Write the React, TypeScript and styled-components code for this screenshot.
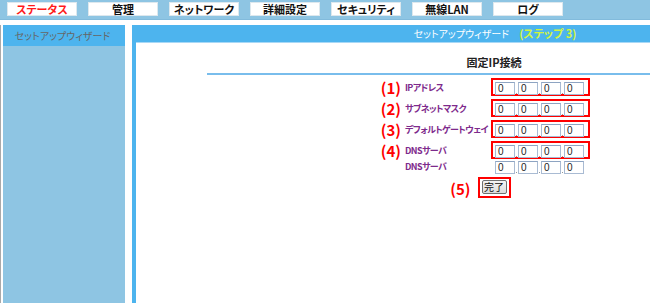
import React from "react";
import styled, { createGlobalStyle } from "styled-components";

const GlobalStyle = createGlobalStyle`
  html, body { margin: 0; padding: 0; background: #fff; overflow: hidden; }
  body {
    font-family: "Noto Sans CJK JP", "Noto Sans", sans-serif;
    font-feature-settings: "palt";
  }
  * { box-sizing: border-box; }
`;

const TopBar = styled.div`
  height: 20px;
  background: #8ec5e3;
  border-bottom: 1px solid #82bbdc;
  display: flex;
  gap: 11px;
  padding: 2px 0 0 7px;
`;

const Tab = styled.div<{ $active?: boolean }>`
  width: 70px;
  height: 14px;
  background: #fff;
  border: 1px solid #dde8ee;
  font-size: 11px;
  font-weight: 700;
  line-height: 12px;
  text-align: center;
  color: ${(p) => (p.$active ? "#ff1a1a" : "#111")};
`;

const Body = styled.div`
  display: flex;
  margin-top: 5px;
  height: 278px;
  border-left: 1px solid #a9a9a9;
  padding-left: 2px;
`;

const Sidebar = styled.div`
  width: 122px;
  flex-shrink: 0;
  background: #8ec5e3;
`;

const SideHeader = styled.div`
  height: 21px;
  background: #4db4ee;
  color: #666;
  font-size: 10px;
  line-height: 21px;
  text-align: center;
  padding-right: 3px;
`;

const Main = styled.div`
  margin-left: 7px;
  width: 720px;
  flex-shrink: 0;
  border-left: 4px solid #4db4ee;
  background: #fff;
`;

const MainHeader = styled.div`
  height: 18px;
  background: #4db4ee;
  border-bottom: 1px solid #a8d8f6;
  color: #fff;
  font-size: 10px;
  line-height: 17px;
  text-align: center;
  padding-left: 2px;
`;

const Step = styled.span`
  color: #d2f53e;
  font-size: 11px;
  font-weight: 700;
  margin-left: 10px;
`;

const Form = styled.div`
  width: 574px;
  margin: 9px auto 0;
`;

const Title = styled.div`
  height: 23px;
  border-bottom: 2px solid #79bdec;
  font-size: 11px;
  font-weight: 700;
  line-height: 20px;
  text-align: center;
  color: #222;
`;

const Rows = styled.div`
  display: flex;
  flex-direction: column;
  gap: 3px;
  margin-top: 3px;
`;

const Row = styled.div<{ $plain?: boolean }>`
  display: grid;
  grid-template-columns: 194px 90px auto;
  align-items: center;
  height: 18px;
  margin-top: ${(p) => (p.$plain ? "-5px" : "0")};
`;

const Num = styled.span`
  justify-self: end;
  color: #ff0000;
  font-size: 15px;
  font-weight: 700;
  line-height: 18px;
  position: relative;
  top: 1px;
`;

const Label = styled.span`
  padding-left: 4px;
  color: #7e2a8c;
  font-size: 9px;
  font-weight: 700;
  letter-spacing: -0.6px;
  white-space: nowrap;
  line-height: 18px;
  position: relative;
  top: 1px;
`;

const IpBox = styled.div<{ $marked?: boolean }>`
  display: flex;
  align-items: flex-start;
  border: 2px solid ${(p) => (p.$marked ? "#ff0000" : "transparent")};
  padding: 2px 4px 0 2px;
  height: 18px;
  width: 99px;
`;

const IpInput = styled.div`
  width: 20px;
  height: 13px;
  border: 1px solid #a9bbd3;
  border-top-color: #8ea4c2;
  background: #fff;
  font-size: 10px;
  line-height: 11px;
  padding-left: 2px;
  color: #222;
  font-family: "Liberation Sans", sans-serif;
`;

const Dot = styled.span`
  width: 3px;
  height: 13px;
  position: relative;
  &::after {
    content: "";
    position: absolute;
    left: 1px;
    bottom: 1px;
    width: 1px;
    height: 1px;
    background: #999;
  }
`;

const ButtonRow = styled.div`
  display: grid;
  grid-template-columns: 1fr auto 1fr;
  align-items: center;
  margin-top: 2px;
`;

const ButtonNum = styled(Num)`
  margin-right: 7px;
`;

const ButtonBox = styled.div`
  border: 2px solid #ff0000;
  padding: 1px 2px 2px;
  height: 21px;
`;

const DoneButton = styled.button`
  display: block;
  width: 25px;
  height: 14px;
  padding: 0;
  border: 1px solid #707070;
  border-radius: 2px;
  background: linear-gradient(#f4f4f4, #dcdcdc);
  font-family: "Noto Sans CJK JP", sans-serif;
  font-size: 10px;
  line-height: 12px;
  color: #111;
`;

const tabs = ["ステータス", "管理", "ネットワーク", "詳細設定", "セキュリティ", "無線LAN", "ログ"];

const rows: { num?: string; label: string; marked: boolean }[] = [
  { num: "(1)", label: "IPアドレス", marked: true },
  { num: "(2)", label: "サブネットマスク", marked: true },
  { num: "(3)", label: "デフォルトゲートウェイ", marked: true },
  { num: "(4)", label: "DNSサーバ", marked: true },
  { label: "DNSサーバ", marked: false },
];

function IpFields({ marked }: { marked: boolean }) {
  return (
    <IpBox $marked={marked}>
      <IpInput>0</IpInput>
      <Dot />
      <IpInput>0</IpInput>
      <Dot />
      <IpInput>0</IpInput>
      <Dot />
      <IpInput>0</IpInput>
    </IpBox>
  );
}

export default function App() {
  return (
    <>
      <GlobalStyle />
      <TopBar>
        {tabs.map((t, i) => (
          <Tab key={t} $active={i === 0}>
            {t}
          </Tab>
        ))}
      </TopBar>
      <Body>
        <Sidebar>
          <SideHeader>セットアップウィザード</SideHeader>
        </Sidebar>
        <Main>
          <MainHeader>
            セットアップウィザード<Step>(ステップ 3)</Step>
          </MainHeader>
          <Form>
            <Title>固定IP接続</Title>
            <Rows>
              {rows.map((r, i) => (
                <Row key={i} $plain={!r.marked}>
                  <Num>{r.num ?? ""}</Num>
                  <Label>{r.label}</Label>
                  <IpFields marked={r.marked} />
                </Row>
              ))}
            </Rows>
            <ButtonRow>
              <ButtonNum>(5)</ButtonNum>
              <ButtonBox>
                <DoneButton>完了</DoneButton>
              </ButtonBox>
              <span />
            </ButtonRow>
          </Form>
        </Main>
      </Body>
    </>
  );
}
